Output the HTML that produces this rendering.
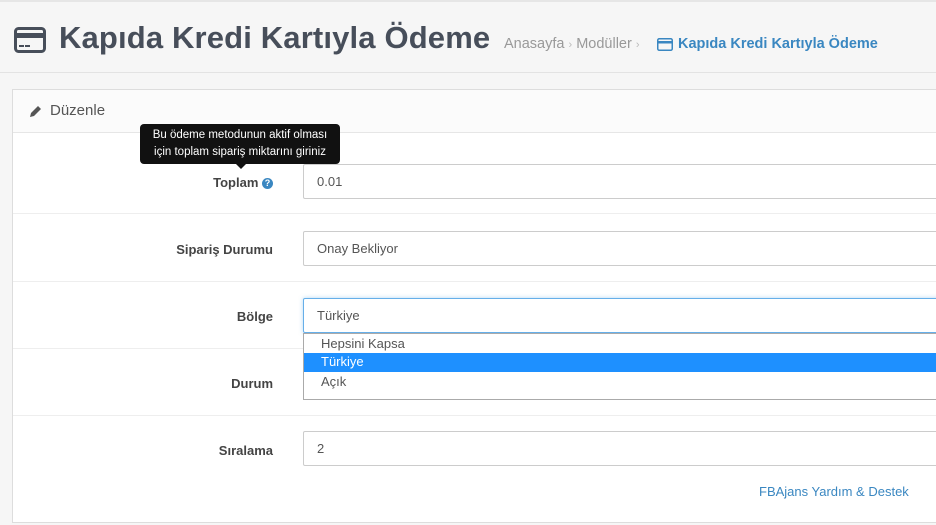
<!DOCTYPE html>
<html><head><meta charset="utf-8"><style>
*{box-sizing:border-box;margin:0;padding:0}
body{width:936px;height:525px;overflow:hidden;background:#f6f6f6;font-family:"Liberation Sans",sans-serif;position:relative;color:#555}
.abs{position:absolute}
.hdr{left:0;top:0;width:936px;height:73px;border-top:2px solid #e6e6e6;border-bottom:1px solid #e3e3e3;background:#f6f6f6}
.title{left:59px;top:20px;font-size:31px;font-weight:bold;color:#474e5a;letter-spacing:0.15px}
.bc{top:36px;font-size:14.5px;color:#999}
.panel{left:12px;top:89px;width:930px;height:434px;border:1px solid #ddd;background:#fff}
.ph{left:0;top:0;width:100%;height:43px;background:#fbfbfb;border-bottom:1px solid #e6e6e6}
.lbl{width:260px;left:0;text-align:right;font-size:13px;font-weight:bold;color:#444}
.inp{left:290px;width:660px;height:35px;border:1px solid #ccc;border-radius:2px;font-size:13px;color:#555;padding:9px 0 0 13px;background:#fff}
.sep{left:0;width:100%;height:1px;background:#eee}
</style></head><body>
<div class="abs hdr"></div>
<svg class="abs" style="left:14px;top:27px" width="32" height="26" viewBox="0 0 32 26"><rect x="1.5" y="1.5" width="29" height="23" rx="3" fill="none" stroke="#474e5a" stroke-width="3"/><rect x="1.5" y="6" width="29" height="5" fill="#474e5a"/><rect x="5" y="18" width="5" height="2" fill="#474e5a"/><rect x="11" y="18" width="5" height="2" fill="#474e5a"/></svg>
<div class="abs title">Kapıda Kredi Kartıyla Ödeme</div>
<div class="abs bc" style="left:504px">Anasayfa <span style="font-size:11px;color:#bbb">›</span> Modüller <span style="font-size:11px;color:#bbb">›</span></div>
<svg class="abs" style="left:657px;top:38px" width="16" height="13" viewBox="0 0 16 13"><rect x="0.75" y="0.75" width="14.5" height="11.5" rx="1.5" fill="none" stroke="#3a87c1" stroke-width="1.5"/><rect x="0.75" y="3" width="14.5" height="2.5" fill="#3a87c1"/></svg>
<div class="abs bc" style="left:678px;color:#3a87c1;font-weight:bold">Kapıda Kredi Kartıyla Ödeme</div>
<div class="abs panel">
 <div class="abs ph"></div>
 <svg class="abs" style="left:16px;top:15px" width="13" height="13" viewBox="0 0 13 13"><path d="M1 12 L2 8 L9 1 L12 4 L5 11 Z" fill="#555"/></svg>
 <div class="abs" style="left:37px;top:12px;font-size:15px;color:#555">Düzenle</div>
 <div class="abs lbl" style="top:85px">Toplam <span style="display:inline-block;width:11px;height:11px;border-radius:50%;background:#3a87c1;color:#fff;font-size:9px;line-height:11px;text-align:center;vertical-align:1px">?</span></div>
 <div class="abs inp" style="top:74px">0.01</div>
 <div class="abs sep" style="top:123px"></div>
 <div class="abs lbl" style="top:152px">Sipariş Durumu</div>
 <div class="abs inp" style="top:141px">Onay Bekliyor</div>
 <div class="abs sep" style="top:191px"></div>
 <div class="abs lbl" style="top:219px">Bölge</div>
 <div class="abs inp" style="top:208px;border-color:#66afe9;box-shadow:0 0 4px rgba(102,175,233,.5)">Türkiye</div>
 <div class="abs sep" style="top:258px"></div>
 <div class="abs lbl" style="top:286px">Durum</div>
 <div class="abs inp" style="top:275px"></div>
 <div class="abs" style="left:290px;top:243px;width:660px;height:67px;border:1px solid #aaa;background:#fff;font-size:13px;color:#555">
  <div style="height:19px;padding:2px 0 0 17px">Hepsini Kapsa</div>
  <div style="height:19px;padding:1px 0 0 17px;background:#1e90ff;color:#fff">Türkiye</div>
  <div style="height:19px;padding:2px 0 0 17px">Açık</div>
 </div>
 <div class="abs sep" style="top:325px"></div>
 <div class="abs lbl" style="top:353px">Sıralama</div>
 <div class="abs inp" style="top:341px">2</div>
 <div class="abs" style="left:746px;top:394px;font-size:13px;color:#3a87c1">FBAjans Yardım &amp; Destek</div>
</div>
<div class="abs" style="left:140px;top:124px;width:200px;height:40px;background:#111;border-radius:4px;color:#fff;font-size:11.5px;text-align:center;line-height:17px;padding-top:3px">Bu ödeme metodunun aktif olması<br>için toplam sipariş miktarını giriniz</div>
<div class="abs" style="left:236px;top:164px;width:0;height:0;border-left:5px solid transparent;border-right:5px solid transparent;border-top:5px solid #111"></div>
</body></html>
